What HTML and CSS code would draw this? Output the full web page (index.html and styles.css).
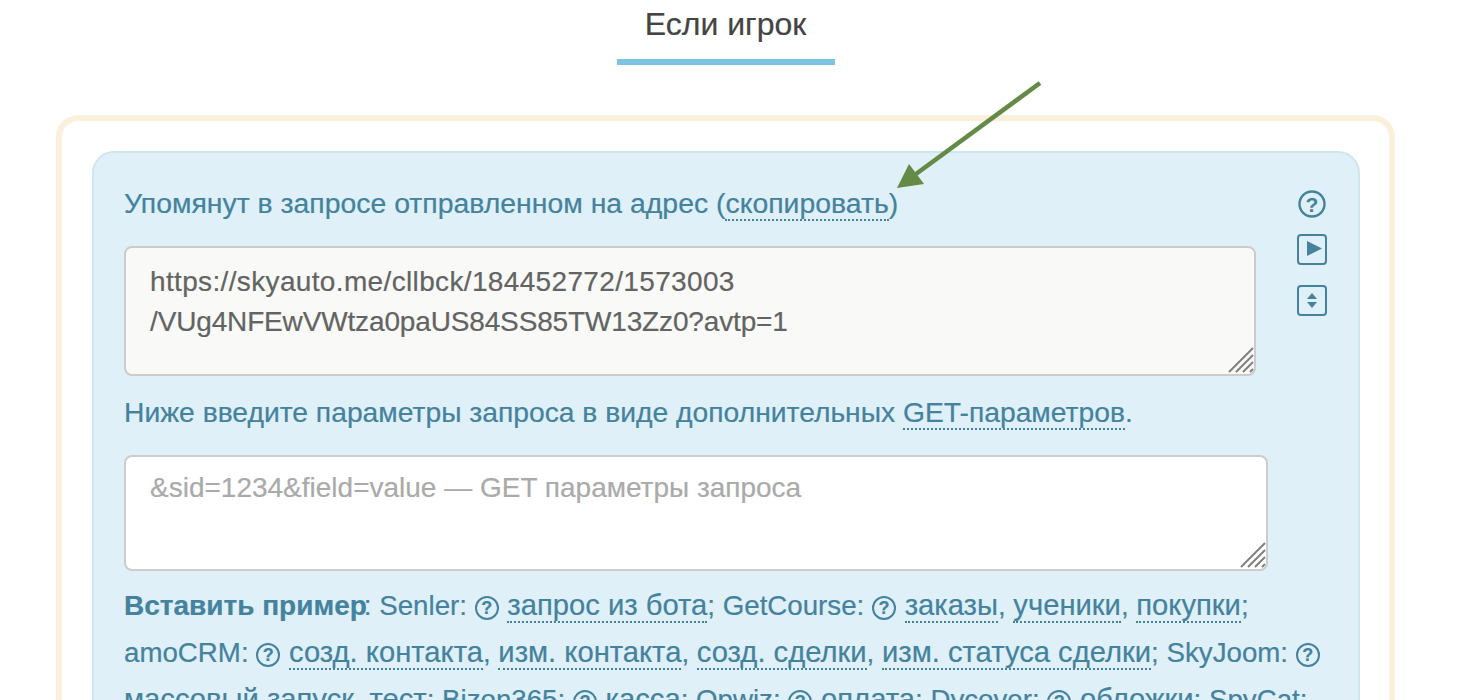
FILE: index.html
```html
<!DOCTYPE html>
<html lang="ru">
<head>
<meta charset="utf-8">
<title>Если игрок</title>
<link rel="stylesheet" href="styles.css">
</head>
<body>
<div class="page">
  <div class="tabs"><div class="tab">Если игрок</div></div>
  <div class="outer">
    <div class="inner">
      <div class="main">
        <p class="label first">Упомянут в запросе отправленном на адрес (<span class="link">скопировать</span>)</p>
        <div class="field ro">
          <div class="ta ta-ro"><div class="url-a">https://skyauto.me/cllbck/184452772/1573003</div><div class="url-b">/VUg4NFEwVWtza0paUS84SS85TW13Zz0?avtp=1</div></div>
          <svg class="grip" width="26" height="26" viewBox="0 0 26 26"><path d="M1 25 25 1M8 25 25 8M15 25 25 15M22 25 25 22" stroke="#808080" stroke-width="2" fill="none"/></svg>
        </div>
        <p class="label second">Ниже введите параметры запроса в виде дополнительных <span class="link">GET-параметров</span>.</p>
      </div>
      <div class="side">
        <svg class="ic-help" width="28" height="28" viewBox="0 0 28 28"><circle cx="14" cy="14" r="12.500" fill="none" stroke="#44829d" stroke-width="2.400"/><text x="14" y="21.500" text-anchor="middle" class="q">?</text></svg>
        <svg class="ic-btn" width="30" height="31" viewBox="0 0 30 31"><rect x="1" y="1" width="28" height="29" rx="3" fill="none" stroke="#44829d" stroke-width="2"/><path d="M10 7v15l15-7.500z" fill="#44829d"/></svg>
        <svg class="ic-btn" width="30" height="31" viewBox="0 0 30 31"><rect x="1" y="1" width="28" height="29" rx="3" fill="none" stroke="#44829d" stroke-width="2"/><path d="M15 8l5 6H10zM15 23l5-6H10z" fill="#44829d"/></svg>
      </div>
      <div class="field params">
        <textarea class="ta" placeholder="&amp;sid=1234&amp;field=value — GET параметры запроса"></textarea>
        <svg class="grip" width="26" height="26" viewBox="0 0 26 26"><path d="M1 25 25 1M8 25 25 8M15 25 25 15M22 25 25 22" stroke="#808080" stroke-width="2" fill="none"/></svg>
      </div>
      <p class="examples"><b>Вставить пример</b>: Senler: <span class="qm">?</span> <span class="link">запрос из бота</span>; GetCourse: <span class="qm">?</span> <span class="link">заказы</span>, <span class="link">ученики</span>, <span class="link">покупки</span>; amoCRM: <span class="qm">?</span> <span class="link">созд. контакта</span>, <span class="link">изм. контакта</span>, <span class="link">созд. сделки</span>, <span class="link">изм. статуса сделки</span>; SkyJoom: <span class="qm">?</span> <span class="link">массовый запуск</span>, <span class="link">тест</span>; Bizon365: <span class="qm">?</span> <span class="link">касса</span>; Opwiz: <span class="qm">?</span> <span class="link">оплата</span>; Dycover: <span class="qm">?</span> <span class="link">обложки</span>; SpyCat:</p>
    </div>
  </div>
  <svg class="arrow" width="160" height="120" viewBox="0 0 160 120"><path d="M146 3 22 94" stroke="#648a45" stroke-width="4.500" fill="none"/><path d="M3 108 15 84 30 104z" fill="#648a45"/></svg>
</div>
</body>
</html>
```
FILE: styles.css
```css
html, body { margin: 0; padding: 0; height: 700px; overflow: hidden; background: #fff; }
body { font-family: "Liberation Sans", Arial, sans-serif; color: #44829d; -webkit-text-stroke: 0.2px; }
.page { position: relative; width: 1472px; height: 700px; overflow: hidden; }
.tabs { display: flex; justify-content: center; height: 115px; margin: 0 77px 0 56px; }
.tab { width: 218px; height: 65px; box-sizing: border-box; border-bottom: 6px solid #7cc4e0; color: #444; font-size: 32px; line-height: 48px; text-align: center; }
.outer { margin: 0 77px 0 56px; border: 6px solid #fbf0dc; border-bottom: 0; border-radius: 22px 22px 0 0; padding: 30px 29px 0 30px; height: 700px; box-sizing: border-box; }
.inner { display: grid; grid-template-columns: 1132px 1fr; align-content: start; background: #dff0f9; border: 2px solid #cfe6f1; border-radius: 22px; padding: 0 0 0 30px; height: 700px; box-sizing: border-box; }
.main { grid-column: 1; grid-row: 1; min-width: 0; }
.side { grid-column: 2; grid-row: 1; display: flex; flex-direction: column; align-items: center; padding-top: 37px; margin-left: 34px; width: 44px; }
.ic-help { margin-bottom: 16px; }
.ic-btn { margin-bottom: 20px; }
.q { font: bold 21px "Liberation Sans", Arial, sans-serif; fill: #44829d; }
.label { margin: 0; font-size: 28.400px; line-height: 40px; }
.first { padding-top: 30px; margin-bottom: 23px; }
.second { margin-top: 16px; margin-bottom: 23px; font-size: 28.250px; }
.link { border-bottom: 2px dotted #44829d; }
.field { position: relative; line-height: 0; }
.ta { display: block; width: 100%; box-sizing: border-box; margin: 0; resize: none; border: 2px solid #ccc; border-radius: 8px; background: #fff; padding: 14px 24px; font-family: "Liberation Sans", Arial, sans-serif; font-size: 28px; line-height: 40px; color: #636363; outline: none; overflow: hidden; }
.ta::placeholder { color: #aaa; opacity: 1; }
.ta-ro { height: 130px; background: #f9faf8; }
.url-a { letter-spacing: 0.350px; }
.url-b { letter-spacing: -0.150px; }
.params { grid-column: 1 / -1; width: 1144px; }
.params .ta { height: 116px; padding-top: 11px; }
.grip { position: absolute; right: 2px; bottom: 3px; }
.examples { grid-column: 1 / -1; margin: 11px 0 0; font-size: 27.700px; line-height: 47px; width: 1206px; }
.examples b { font-size: 28px; margin-right: -3px; }
.examples .link { font-size: 29.200px; }
.qm { display: inline-block; box-sizing: border-box; width: 24px; height: 24px; margin-right: 1px; border: 2px solid #44829d; border-radius: 50%; font-size: 18px; font-weight: 700; line-height: 20px; text-align: center; vertical-align: 1px; }
.arrow { position: absolute; left: 894px; top: 80px; }
```
